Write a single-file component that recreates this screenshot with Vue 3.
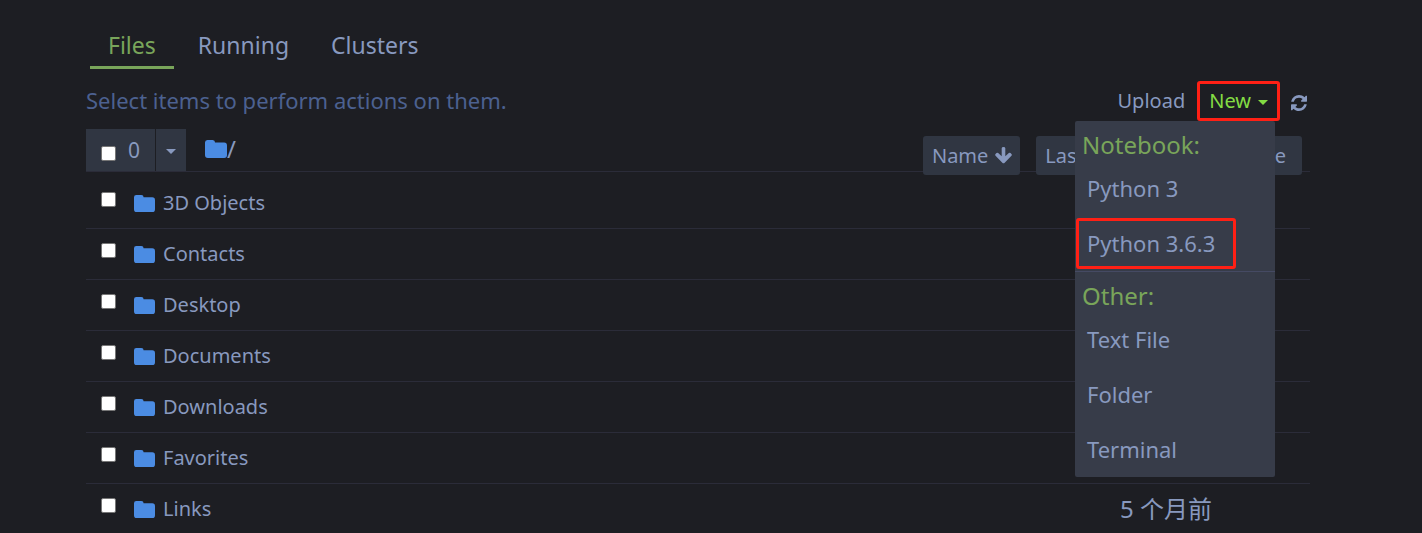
<script setup>
import { ref } from 'vue'

const tabs = ['Files', 'Running', 'Clusters']
const activeTab = ref('Files')
const folders = [
  { name: '3D Objects' },
  { name: 'Contacts' },
  { name: 'Desktop' },
  { name: 'Documents' },
  { name: 'Downloads' },
  { name: 'Favorites' },
  { name: 'Links', modified: '5 个月前' },
]
const menu = [
  { title: 'Notebook:', items: ['Python 3', 'Python 3.6.3'] },
  { title: 'Other:', items: ['Text File', 'Folder', 'Terminal'] },
]
</script>

<template>
  <main class="page">
    <nav class="tabs">
      <a
        v-for="tab in tabs"
        :key="tab"
        href="#"
        class="tab"
        :class="{ active: tab === activeTab }"
        @click.prevent="activeTab = tab"
      >{{ tab }}</a>
    </nav>

    <div class="toolbar">
      <p class="hint">Select items to perform actions on them.</p>
      <div class="actions">
        <button type="button" class="plain">Upload</button>
        <div class="dropdown">
          <button type="button" class="plain new" aria-haspopup="true" aria-expanded="true">
            New <span class="caret"></span>
          </button>
          <div class="menu">
            <section v-for="group in menu" :key="group.title" class="group">
              <h2 class="group-title">{{ group.title }}</h2>
              <a
                v-for="item in group.items"
                :key="item"
                href="#"
                class="item"
                :class="{ marked: item === 'Python 3.6.3' }"
                @click.prevent
              >{{ item }}</a>
            </section>
          </div>
        </div>
        <button type="button" class="plain refresh" aria-label="Refresh">
          <svg width="16" height="16" viewBox="0 0 1536 1536" aria-hidden="true">
            <path d="M1511 928q0 5-1 7-64 268-268 434.500T764 1536q-146 0-282.500-55T238 1324l-129 129q-19 19-45 19t-45-19-19-45V960q0-26 19-45t45-19h448q26 0 45 19t19 45-19 45l-137 137q71 66 161 102t187 36q134 0 250-65t186-179q11-17 53-117 8-23 30-23h192q13 0 22.500 9.500t9.500 22.500zM1536 128v448q0 26-19 45t-45 19h-448q-26 0-45-19t-19-45 19-45l138-138Q969 256 768 256q-134 0-250 65T332 500q-11 17-53 117-8 23-30 23H50q-13 0-22.500-9.500T18 608v-7q65-268 270-434.500T768 0q146 0 284 55.500T1297 212l130-129q19-19 45-19t45 19 19 45z" />
          </svg>
        </button>
      </div>
    </div>

    <div class="list-header">
      <div class="selector">
        <label class="select-all">
          <input type="checkbox" class="box" aria-label="Select all">
          <span>0</span>
        </label>
        <button type="button" class="select-more" aria-label="Selection options"><span class="caret"></span></button>
      </div>
      <a href="#" class="crumb" @click.prevent>
        <svg class="folder" width="22" height="18" viewBox="0 0 23 18" preserveAspectRatio="none" aria-hidden="true">
          <path d="M2.500 0H8q2.500 0 2.500 2.500H20q3 0 3 3V15q0 3-3 3H3q-3 0-3-3V2.500Q0 0 2.500 0z" />
        </svg>/
      </a>
      <div class="sorts">
        <button type="button" class="sort sorted">
          Name
          <svg width="17" height="17" viewBox="0 0 16 16" aria-hidden="true">
            <path d="M6.300 1.200Q6.300 0 8 0t1.700 1.200v7.600l3.300-3.100q.8-.7 1.600 0l.9.900q.7.800 0 1.600L9.100 14.800q-1.100 1-2.200 0L.5 8.200q-.7-.8 0-1.600l.9-.9q.8-.7 1.600 0l3.300 3.100z" />
          </svg>
        </button>
        <button type="button" class="sort">Last Modified</button>
        <button type="button" class="sort">File size</button>
      </div>
    </div>

    <ul class="rows">
      <li v-for="folder in folders" :key="folder.name" class="row">
        <input type="checkbox" class="box" :aria-label="folder.name">
        <a href="#" class="name" @click.prevent>
          <svg class="folder" width="21" height="17" viewBox="0 0 23 18" preserveAspectRatio="none" aria-hidden="true">
            <path d="M2.500 0H8q2.500 0 2.500 2.500H20q3 0 3 3V15q0 3-3 3H3q-3 0-3-3V2.500Q0 0 2.500 0z" />
          </svg>
          {{ folder.name }}
        </a>
        <span v-if="folder.modified" class="modified">{{ folder.modified }}</span>
      </li>
    </ul>
  </main>
</template>

<style>
body {
  margin: 0;
  background: #1d1e23;
  overflow: hidden;
}
</style>

<style scoped>
.page {
  box-sizing: border-box;
  padding: 24px 112px 0 86px;
  font-family: "Noto Sans", "Noto Sans CJK SC", sans-serif;
  font-size: 20px;
  line-height: 30px;
  color: #8899bf;
}
a {
  color: inherit;
  text-decoration: none;
}
button {
  margin: 0;
  border: 0;
  font: inherit;
  color: inherit;
  cursor: pointer;
}
svg {
  flex: none;
  fill: currentColor;
}
.tabs {
  display: flex;
  gap: 6px;
  padding-left: 4px;
  font-size: 23px;
}
.tab {
  padding: 6px 18px;
  border-bottom: 3px solid transparent;
}
.active {
  color: #79a55a;
  border-color: #79a55a;
}
.toolbar {
  display: flex;
  justify-content: space-between;
  padding: 12px 0 0;
}
.hint {
  margin: 4px 0 0;
  font-size: 22px;
  color: #4c6190;
}
.actions {
  display: flex;
  height: 40px;
  padding-right: 3px;
}
.plain {
  background: none;
  padding: 0;
}
.dropdown {
  position: relative;
  margin: 0 11px 0 12px;
}
.new {
  display: flex;
  align-items: center;
  gap: 7px;
  height: 40px;
  padding: 0 9px;
  border: 3px solid #ff2015;
  border-radius: 3px;
  color: #83dc43;
}
.refresh {
  display: flex;
  align-items: center;
  padding-top: 3px;
}
.caret {
  margin-top: 2px;
  border: 5px solid transparent;
  border-top-color: currentColor;
  border-bottom: 0;
}
.menu {
  position: absolute;
  z-index: 1;
  top: 40px;
  right: 5px;
  width: 200px;
  background: #373c49;
  border-radius: 2px;
}
.group + .group {
  border-top: 1px solid #454a63;
}
.group-title {
  margin: 0;
  padding: 9px 7px 1px;
  font-size: 24px;
  font-weight: 400;
  color: #79a55a;
}
.item {
  display: block;
  box-sizing: border-box;
  height: 55px;
  padding: 12px;
  font-size: 22px;
}
.marked {
  width: 160px;
  height: 51px;
  margin: 2px 0 2px 1px;
  padding: 7px 8px;
  border: 3px solid #ff2015;
  border-radius: 3px;
}
.list-header {
  display: flex;
  height: 42px;
  margin-top: 8px;
  border-bottom: 1px solid #2b2c39;
}
.selector {
  display: flex;
  gap: 1px;
}
.select-all {
  display: flex;
  align-items: center;
  gap: 12px;
  padding: 0 15px;
  font-size: 21px;
  background: #303642;
}
.select-all .box {
  margin-top: 6px;
}
.select-more {
  display: flex;
  align-items: center;
  padding: 1px 10px 0;
  background: #303642;
}
.box {
  flex: none;
  appearance: none;
  box-sizing: border-box;
  width: 15px;
  height: 15px;
  margin: 0;
  border: 1px solid #767676;
  border-radius: 2px;
  background: #fff;
}
.crumb {
  display: flex;
  align-items: center;
  height: 40px;
  margin-left: 19px;
  font-size: 24px;
}
.folder {
  fill: #4b8ce3;
}
.sorts {
  display: flex;
  gap: 16px;
  height: 39px;
  margin: 7px 8px 0 auto;
}
.sort {
  display: flex;
  align-items: center;
  gap: 7px;
  padding: 0 16px 0 9px;
  border-radius: 3px;
  background: #303642;
}
.sorted {
  padding-right: 8px;
}
.rows {
  margin: 0;
  padding: 6px 0 0;
  list-style: none;
}
.row {
  display: flex;
  align-items: center;
  height: 50px;
  padding: 0 98px 0 15px;
  border-bottom: 1px solid #2b2c39;
}
.row .box {
  margin-bottom: 8px;
}
.name {
  display: flex;
  align-items: center;
  gap: 8px;
  margin-left: 18px;
}
.modified {
  margin-left: auto;
  font-size: 24px;
}
</style>
